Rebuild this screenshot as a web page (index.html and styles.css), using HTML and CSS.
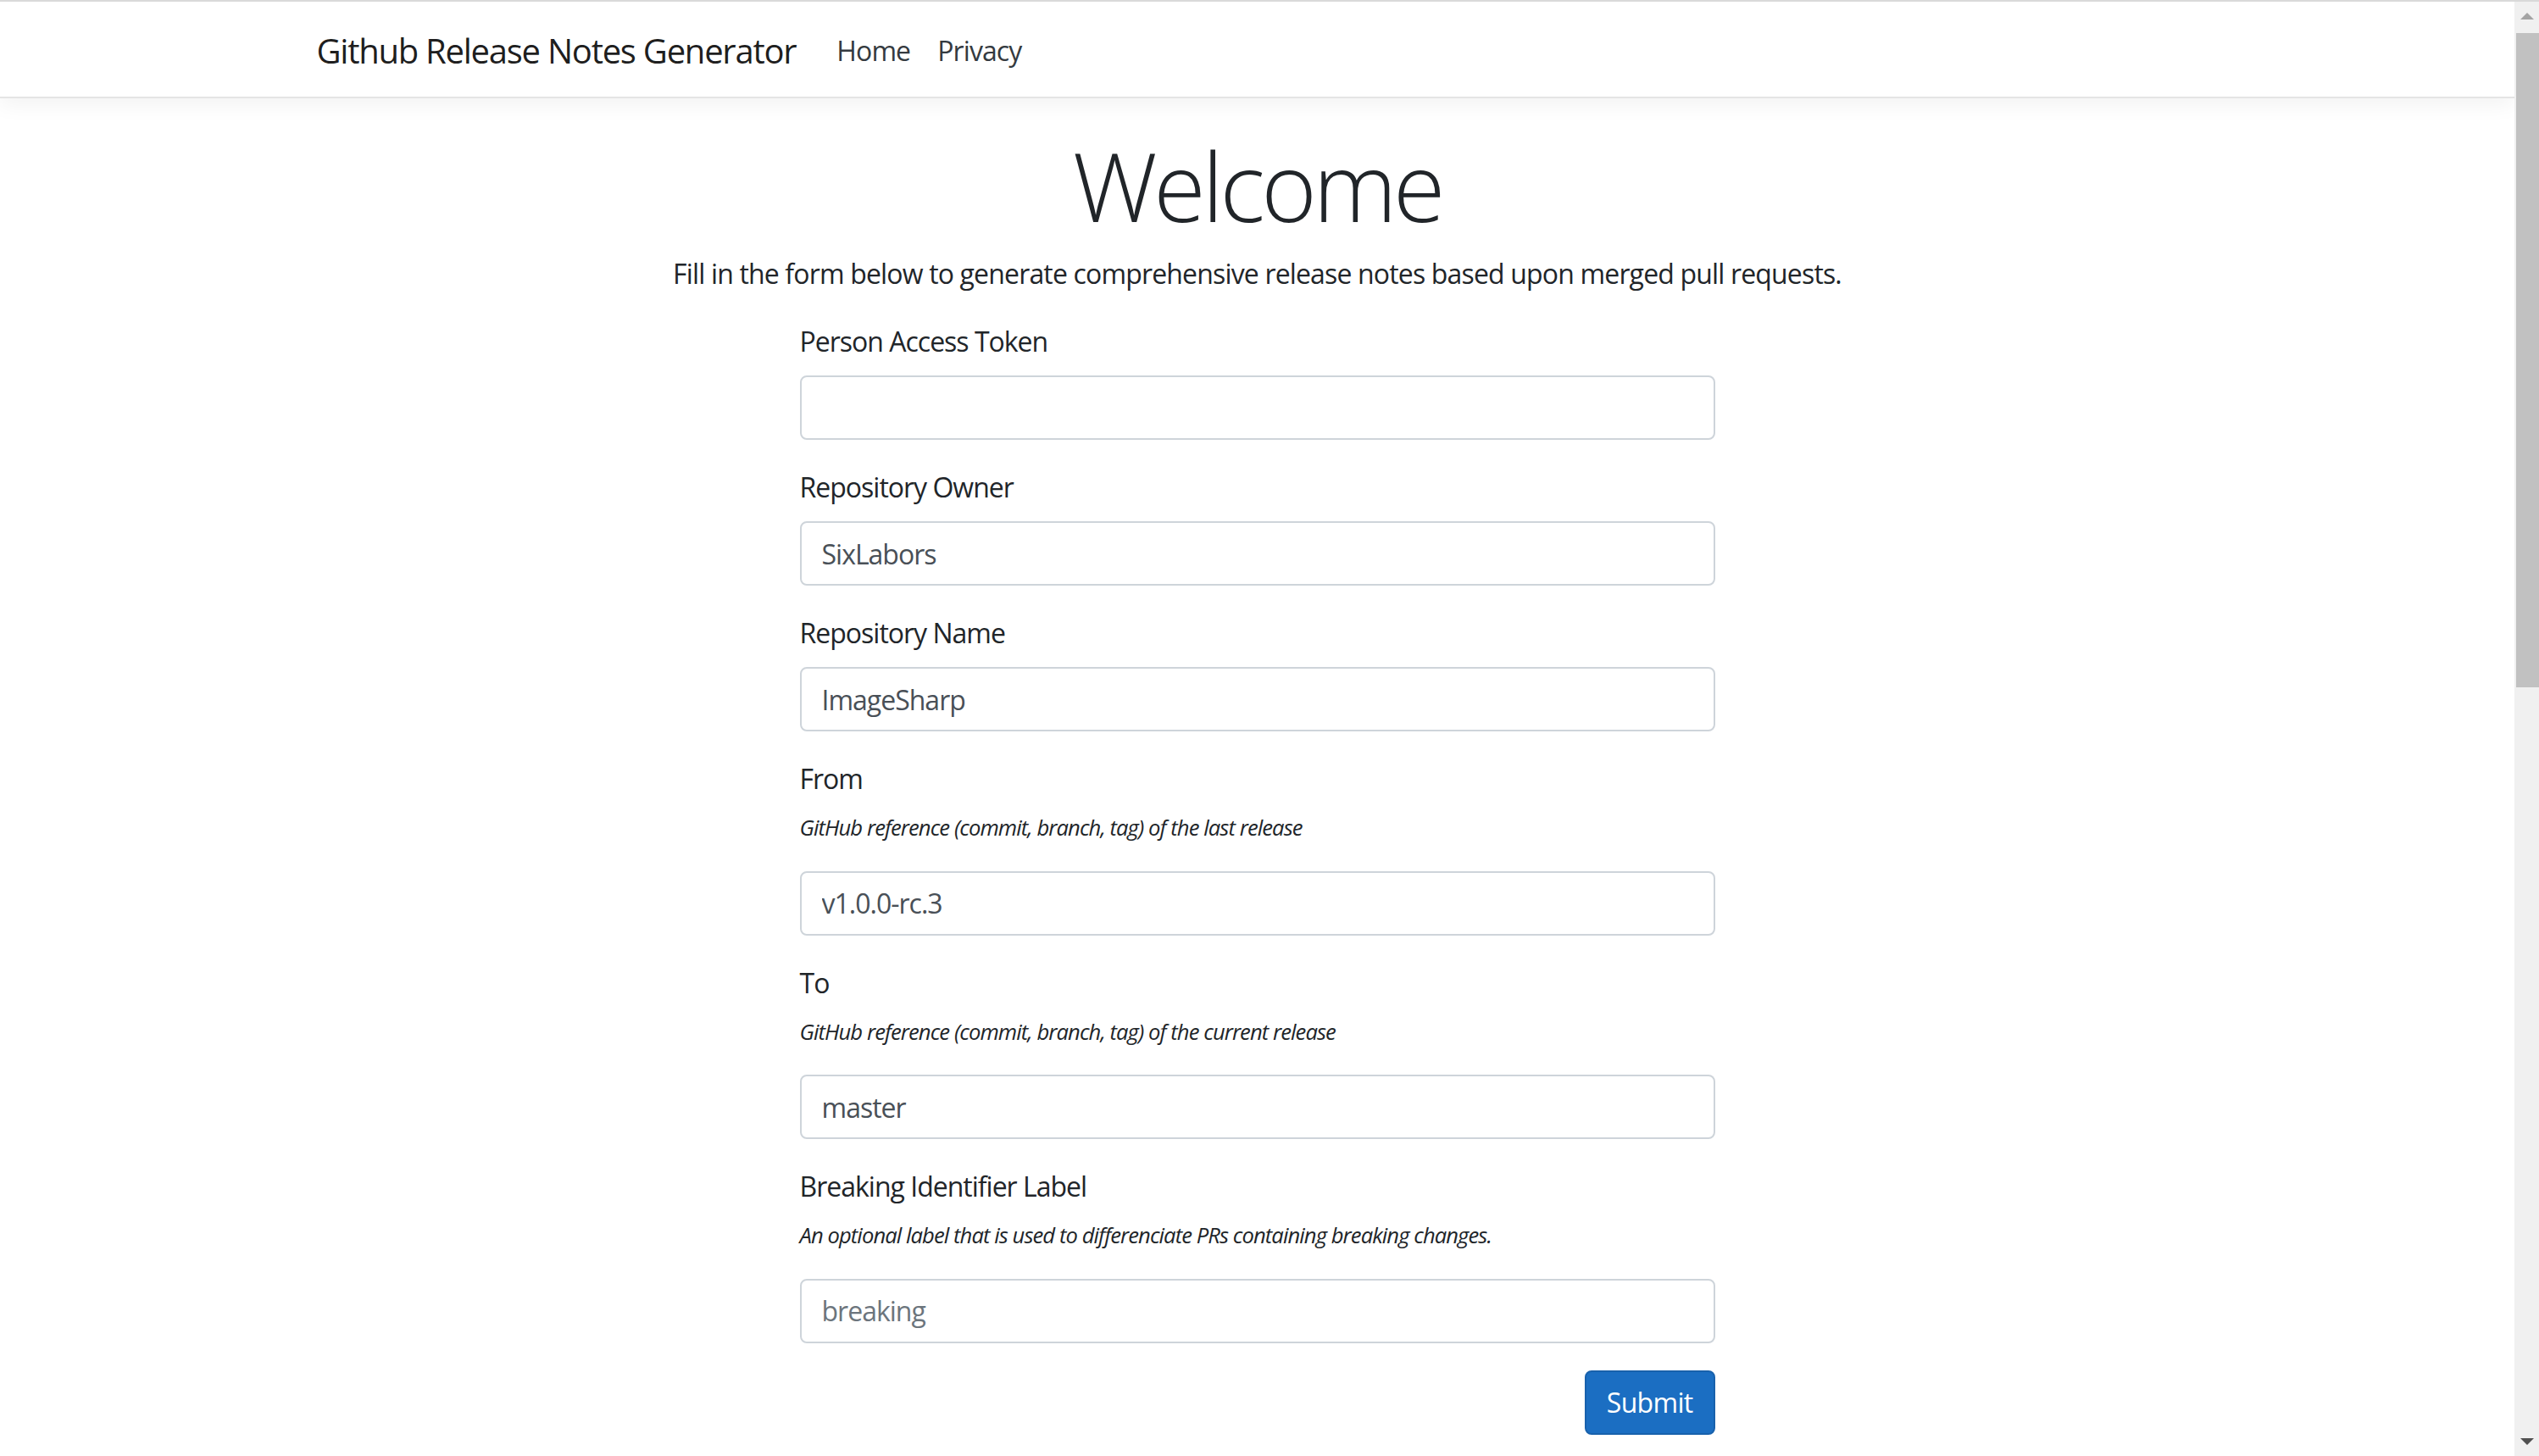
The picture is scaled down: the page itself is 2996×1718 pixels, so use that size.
FILE: index.html
```html
<!DOCTYPE html>
<html lang="en">
<head>
<meta charset="utf-8">
<title>Github Release Notes Generator</title>
<link rel="stylesheet" href="styles.css">
</head>
<body>
<div class="window">
  <div class="viewport">
    <header class="navbar">
      <div class="container nav-inner">
        <a class="brand" href="#">Github Release Notes Generator</a>
        <nav class="nav">
          <a class="nav-link" href="#">Home</a>
          <a class="nav-link" href="#">Privacy</a>
        </nav>
      </div>
    </header>
    <main class="container main">
      <div class="intro">
        <h1 class="display">Welcome</h1>
        <p class="lead">Fill in the form below to generate comprehensive release notes based upon merged pull requests.</p>
      </div>
      <form class="form">
        <div class="group">
          <label class="label" for="token">Person Access Token</label>
          <input class="control" id="token" type="text">
        </div>
        <div class="group">
          <label class="label" for="owner">Repository Owner</label>
          <input class="control" id="owner" type="text" value="SixLabors">
        </div>
        <div class="group">
          <label class="label" for="name">Repository Name</label>
          <input class="control" id="name" type="text" value="ImageSharp">
        </div>
        <div class="group">
          <label class="label" for="from">From</label>
          <p class="hint"><em>GitHub reference (commit, branch, tag) of the last release</em></p>
          <input class="control" id="from" type="text" value="v1.0.0-rc.3">
        </div>
        <div class="group">
          <label class="label" for="to">To</label>
          <p class="hint"><em>GitHub reference (commit, branch, tag) of the current release</em></p>
          <input class="control" id="to" type="text" value="master">
        </div>
        <div class="group">
          <label class="label" for="breaking">Breaking Identifier Label</label>
          <p class="hint"><em>An optional label that is used to differenciate PRs containing breaking changes.</em></p>
          <input class="control" id="breaking" type="text" placeholder="breaking">
        </div>
        <div class="actions">
          <button class="btn-primary" type="submit">Submit</button>
        </div>
      </form>
    </main>
  </div>
  <div class="scrollbar">
    <div class="sb-button"><span class="arrow-up"></span></div>
    <div class="sb-track">
      <div class="sb-thumb"></div>
    </div>
    <div class="sb-button"><span class="arrow-down"></span></div>
  </div>
</div>
</body>
</html>
```

FILE: styles.css
```css
* { box-sizing: border-box; }

html, body {
  margin: 0;
  height: 100%;
}

body {
  font-family: "Open Sans", "Noto Sans", sans-serif;
  font-size: 32px;
  line-height: 48px;
  color: #212529;
  background: #fff;
  overflow: hidden;
}

.window {
  display: flex;
  height: 100%;
  border-top: 2px solid #d9d9d9;
}

.viewport {
  flex: 1;
  min-width: 0;
  overflow: hidden;
}

.container {
  width: 100%;
  max-width: 2280px;
  margin: 0 auto;
  padding: 0 30px;
}

/* Navbar */
.navbar {
  background: #fff;
  border-bottom: 2px solid #e5e5e5;
  box-shadow: 0 8px 24px rgba(0, 0, 0, 0.05);
  padding: 16px 0;
  position: relative;
  z-index: 1;
}

.nav-inner {
  display: flex;
  align-items: center;
}

.brand {
  font-size: 40px;
  line-height: 60px;
  padding: 12px 0 8px;
  margin-right: 32px;
  color: rgba(0, 0, 0, 0.9);
  text-decoration: none;
  letter-spacing: -1.25px;
}

.nav {
  display: flex;
}

.nav-link {
  padding: 18px 16px 14px;
  color: #343a40;
  text-decoration: none;
  letter-spacing: -0.9px;
}

/* Main */
.main {
  padding-top: 33px;
  padding-bottom: 32px;
}

.intro {
  text-align: center;
}

.display {
  font-size: 112px;
  font-weight: 300;
  line-height: 128px;
  padding-top: 6px;
  margin: 0 0 16px;
  letter-spacing: -4.4px;
}

.lead {
  margin: 0 0 32px;
  letter-spacing: -0.84px;
}

.form {
  width: 1080px;
  margin: 0 auto;
}

.group {
  margin-bottom: 32px;
}

.label {
  display: block;
  margin-bottom: 16px;
  letter-spacing: -1px;
}

.hint {
  font-size: 25.6px;
  line-height: 36.5px;
  margin: 0 0 32px;
  letter-spacing: -0.92px;
}

.control {
  display: block;
  width: 100%;
  height: 76px;
  padding: 12px 24px;
  font-family: inherit;
  font-size: 32px;
  line-height: 48px;
  color: #495057;
  background: #fff;
  border: 2px solid #ced4da;
  border-radius: 8px;
  letter-spacing: -1px;
  outline: none;
}

.control::placeholder {
  color: #6c757d;
  opacity: 1;
}

.actions {
  display: flex;
  justify-content: flex-end;
}

.btn-primary {
  font-family: inherit;
  font-size: 32px;
  line-height: 48px;
  padding: 12px 24px;
  color: #fff;
  background: #1b6ec2;
  border: 2px solid #1861ac;
  border-radius: 8px;
  letter-spacing: -0.7px;
  cursor: pointer;
}

/* Scrollbar */
.scrollbar {
  width: 29px;
  flex: none;
  display: flex;
  flex-direction: column;
  background: #f0f0f0;
}

.sb-button {
  height: 34px;
  flex: none;
  display: flex;
  align-items: center;
  justify-content: center;
}

.sb-track {
  flex: 1;
  padding: 3px 0 0 2px;
}

.sb-thumb {
  height: 772px;
  background: #c1c1c1;
}

.arrow-up {
  width: 0;
  height: 0;
  border-left: 8px solid transparent;
  border-right: 8px solid transparent;
  border-bottom: 8px solid #a3a3a3;
}

.arrow-down {
  width: 0;
  height: 0;
  border-left: 8px solid transparent;
  border-right: 8px solid transparent;
  border-top: 8px solid #505050;
}
```
